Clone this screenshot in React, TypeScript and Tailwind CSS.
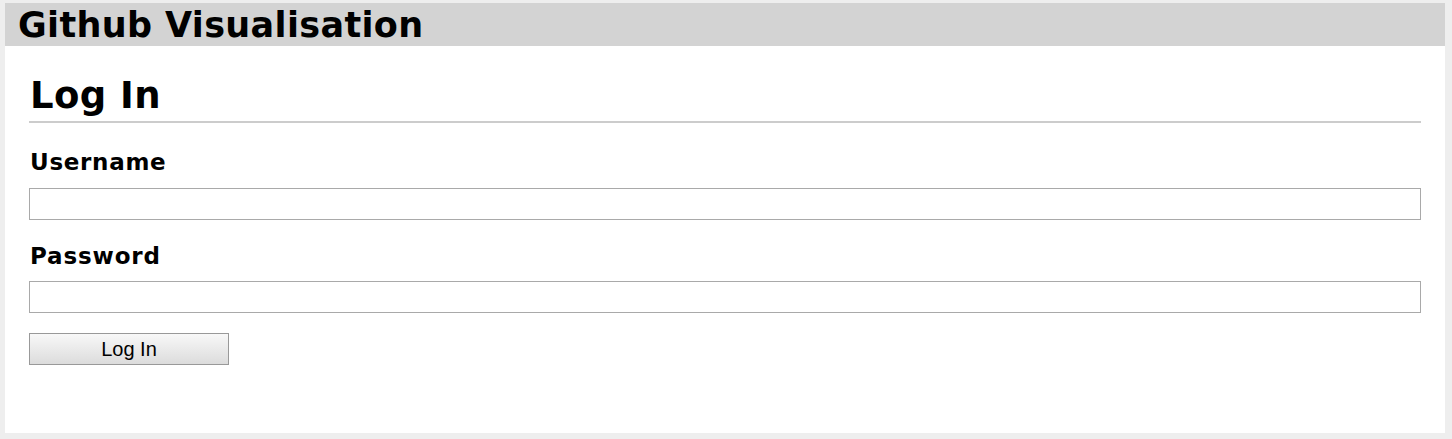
export default function App() {
  return (
    <div className="w-[1452px] h-[439px] bg-[#eeeeee] pt-[3px] pl-[5px] pr-[7px] pb-[6px]" style={{ fontFamily: '"DejaVu Sans", Verdana, sans-serif' }}>
      <div className="bg-white h-full flex flex-col">
        <div className="bg-[#d3d3d3] h-[43px] pl-[13px] pt-[1px] flex items-center">
          <h1 className="text-[35px] font-bold text-black leading-none tracking-[0.35px]">Github Visualisation</h1>
        </div>
        <div className="px-[24px] pt-[31px]">
          <h2 className="text-[37px] font-bold text-black leading-none pl-[1px] tracking-[0.4px]">Log In</h2>
          <div className="mt-[7px] h-[2px] bg-[#cccccc]" />
          <label className="block mt-[28px] text-[23px] font-bold text-black leading-none pl-[1px] tracking-[0.7px]">Username</label>
          <input className="block mt-[14px] w-full h-[32px] border border-[#a9a9a9] bg-white" />
          <label className="block mt-[25px] text-[23px] font-bold text-black leading-none pl-[1px] tracking-[0.85px]">Password</label>
          <input type="password" className="block mt-[13px] w-full h-[32px] border border-[#a9a9a9] bg-white" />
          <button className="block mt-[20px] w-[200px] h-[32px] border border-[#999999] bg-gradient-to-b from-[#f8f8f8] to-[#dcdcdc] text-[20px] text-black leading-none" style={{ fontFamily: '"Liberation Sans", Arial, sans-serif' }}>Log In</button>
        </div>
      </div>
    </div>
  );
}
